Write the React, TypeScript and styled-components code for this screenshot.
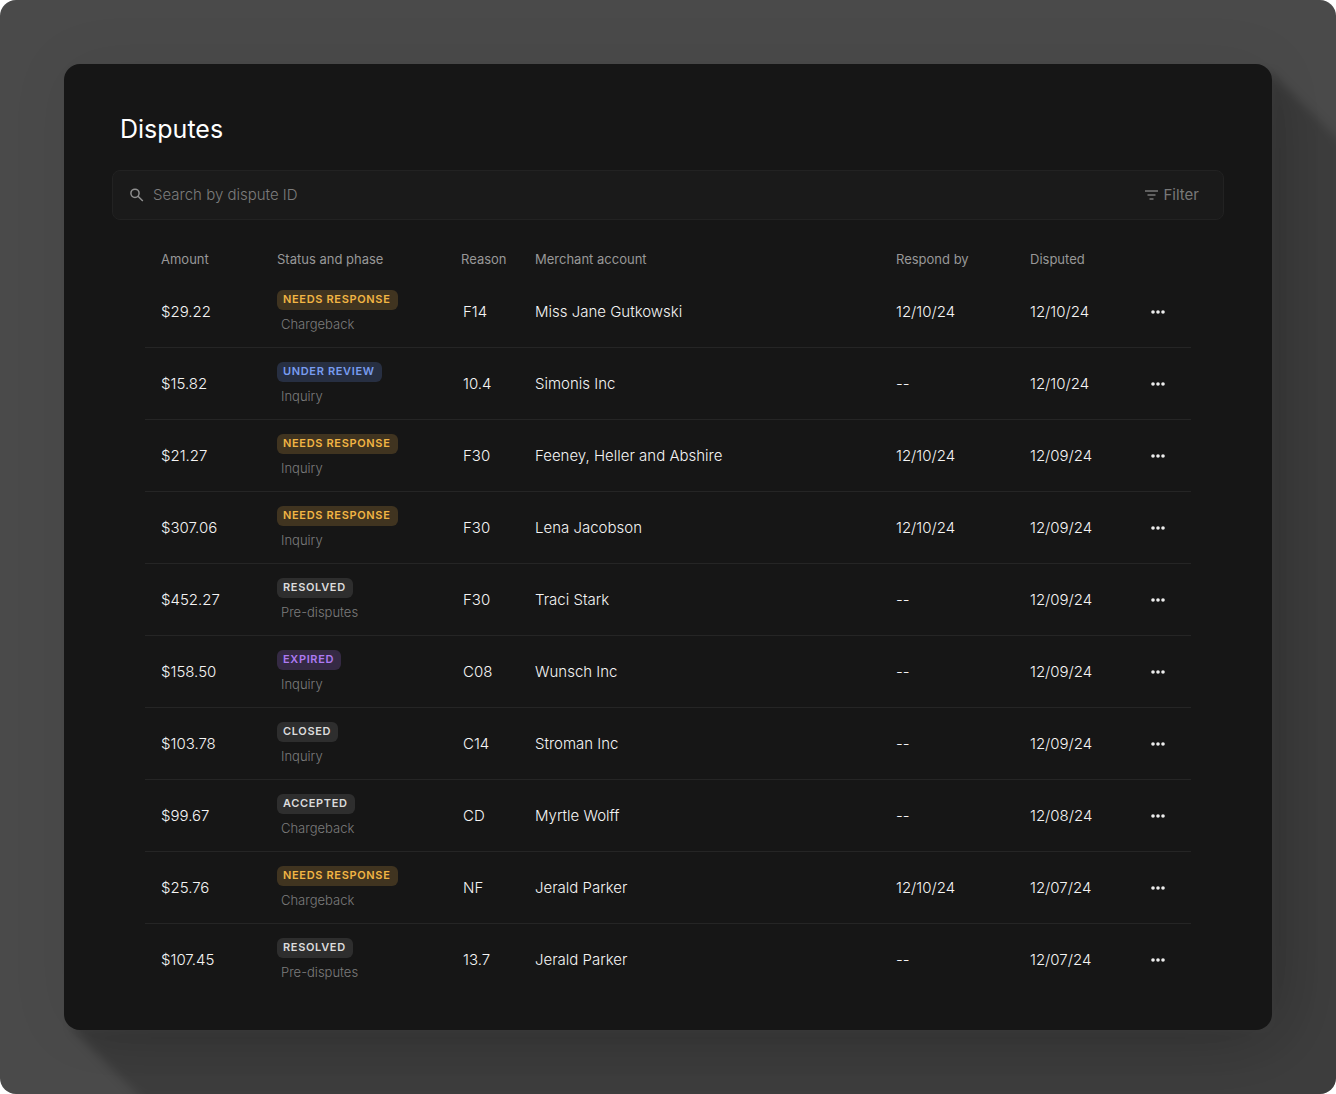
import React from "react";
import styled, { createGlobalStyle } from "styled-components";

const GlobalStyle = createGlobalStyle`
  *, *::before, *::after { box-sizing: border-box; }
  body {
    margin: 0;
    background: #ffffff;
    font-family: Inter, "Liberation Sans", sans-serif;
  }
`;

const Stage = styled.div`
  display: flex;
  min-height: 100vh;
  padding: 64px;
  overflow: hidden;
  border-radius: 16px;
  background: #4a4a4a;
`;

const PanelFrame = styled.div`
  position: relative;
  isolation: isolate;
  display: flex;
  flex: 1;
  min-width: 0;
`;

const Shade = styled.div`
  position: absolute;
  inset: 0 -96px -96px 0;
  z-index: -1;
  filter: blur(5px);
  pointer-events: none;
`;

// Long shadow cast at 45 degrees from the panel's two side corners, darkest next to the panel.
const Cast = styled.div`
  position: absolute;
  inset: 0;
  background: rgba(0, 0, 0, 0.17);
  clip-path: polygon(
    9px 9px,
    calc(100% - 96px) 9px,
    100% 105px,
    100% 100%,
    105px 100%,
    9px calc(100% - 96px)
  );

  &::before {
    content: "";
    position: absolute;
    inset: 0 96px 96px 0;
    border-radius: 16px;
    box-shadow: 0 0 72px rgba(0, 0, 0, 0.28);
  }
`;

const Panel = styled.main`
  flex: 1;
  min-width: 0;
  padding: 48px 48px 32px;
  border-radius: 16px;
  background: #161616;
  box-shadow: 0 0 64px rgba(0, 0, 0, 0.06);
`;

const Title = styled.h1`
  margin: 0;
  padding: 0 8px;
  color: #ffffff;
  font-size: 25px;
  font-weight: 400;
  line-height: 34px;
`;

const SearchBar = styled.form`
  display: flex;
  align-items: center;
  gap: 8px;
  height: 50px;
  margin-top: 24px;
  padding: 0 24px 0 16px;
  border: 1px solid #222222;
  border-radius: 8px;
  background: #1a1a1a;
`;

const SearchLabel = styled.label`
  display: flex;
  color: #8f8f8f;
`;

const SearchInput = styled.input`
  flex: 1;
  min-width: 0;
  padding: 0;
  border: 0;
  outline: 0;
  background: transparent;
  color: #f0f0f0;
  font: 300 15px/24px Inter, "Liberation Sans", sans-serif;

  &::placeholder {
    color: #7c7c7c;
    opacity: 1;
  }
`;

const FilterButton = styled.button`
  display: flex;
  align-items: center;
  gap: 4px;
  padding: 0;
  border: 0;
  background: transparent;
  color: #787878;
  font: 400 15px/24px Inter, "Liberation Sans", sans-serif;
  cursor: pointer;
`;

const TableWrap = styled.div`
  padding: 20px 33px 0;
`;

const Table = styled.table`
  width: 100%;
  border-collapse: separate;
  border-spacing: 0;
  table-layout: fixed;
`;

const HeadCell = styled.th<{ $width?: number }>`
  width: ${({ $width }) => ($width ? `${$width}px` : "auto")};
  height: 36px;
  padding: 2px 0 0 16px;
  color: #989898;
  font-size: 13px;
  font-weight: 400;
  line-height: 16px;
  text-align: left;
  white-space: nowrap;
`;

const Cell = styled.td<{ $indent?: number }>`
  height: 72px;
  padding: 0 0 0 ${({ $indent = 16 }) => $indent}px;
  border-bottom: 1px solid #252525;
  color: #f4f4f4;
  font-size: 15px;
  font-weight: 300;
  line-height: 20px;
  white-space: nowrap;

  tr:last-child > & {
    border-bottom-color: transparent;
  }
`;

const StatusStack = styled.div`
  display: flex;
  flex-direction: column;
  align-items: flex-start;
  gap: 6px;
  padding-bottom: 2px;
`;

type Tone = "amber" | "blue" | "violet" | "neutral";

const tones: Record<Tone, { fill: string; text: string }> = {
  amber: { fill: "#403420", text: "#f2b544" },
  blue: { fill: "#272f42", text: "#789cf0" },
  violet: { fill: "#352a44", text: "#ad7af2" },
  neutral: { fill: "#2e2e2e", text: "#dcdcdc" },
};

const Badge = styled.span<{ $tone: Tone }>`
  height: 20px;
  padding: 0 7px 0 6px;
  border-radius: 6px;
  background: ${({ $tone }) => tones[$tone].fill};
  color: ${({ $tone }) => tones[$tone].text};
  font-size: 11px;
  font-weight: 600;
  line-height: 19px;
  letter-spacing: 0.06em;
  text-transform: uppercase;
`;

const Phase = styled.span`
  padding-left: 4px;
  color: #7c7c7c;
  font-size: 13px;
  font-weight: 300;
  line-height: 16px;
`;

const MoreButton = styled.button`
  display: flex;
  padding: 0;
  border: 0;
  background: transparent;
  color: #ededed;
  cursor: pointer;
`;

const SearchIcon = () => (
  <svg width="16" height="16" viewBox="0 0 16 16" fill="none" stroke="currentColor" strokeWidth="1.5" aria-hidden="true">
    <circle cx="6" cy="6.3" r="4.1" />
    <path d="M9 9.3 13.8 14" />
  </svg>
);

const FilterIcon = () => (
  <svg width="16" height="16" viewBox="0 0 16 16" fill="none" stroke="currentColor" strokeWidth="1.6" aria-hidden="true">
    <path d="M1 4h13M3.5 8h8M5.5 12h4" />
  </svg>
);

const MoreIcon = () => (
  <svg width="14" height="16" viewBox="0 0 14 16" fill="currentColor" aria-hidden="true">
    <circle cx="2" cy="8" r="1.8" />
    <circle cx="7" cy="8" r="1.8" />
    <circle cx="12" cy="8" r="1.8" />
  </svg>
);

interface Dispute {
  amount: string;
  status: string;
  tone: Tone;
  phase: string;
  reason: string;
  merchant: string;
  respondBy: string;
  disputed: string;
}

const disputes: Dispute[] = [
  { amount: "$29.22", status: "Needs response", tone: "amber", phase: "Chargeback", reason: "F14", merchant: "Miss Jane Gutkowski", respondBy: "12/10/24", disputed: "12/10/24" },
  { amount: "$15.82", status: "Under review", tone: "blue", phase: "Inquiry", reason: "10.4", merchant: "Simonis Inc", respondBy: "--", disputed: "12/10/24" },
  { amount: "$21.27", status: "Needs response", tone: "amber", phase: "Inquiry", reason: "F30", merchant: "Feeney, Heller and Abshire", respondBy: "12/10/24", disputed: "12/09/24" },
  { amount: "$307.06", status: "Needs response", tone: "amber", phase: "Inquiry", reason: "F30", merchant: "Lena Jacobson", respondBy: "12/10/24", disputed: "12/09/24" },
  { amount: "$452.27", status: "Resolved", tone: "neutral", phase: "Pre-disputes", reason: "F30", merchant: "Traci Stark", respondBy: "--", disputed: "12/09/24" },
  { amount: "$158.50", status: "Expired", tone: "violet", phase: "Inquiry", reason: "C08", merchant: "Wunsch Inc", respondBy: "--", disputed: "12/09/24" },
  { amount: "$103.78", status: "Closed", tone: "neutral", phase: "Inquiry", reason: "C14", merchant: "Stroman Inc", respondBy: "--", disputed: "12/09/24" },
  { amount: "$99.67", status: "Accepted", tone: "neutral", phase: "Chargeback", reason: "CD", merchant: "Myrtle Wolff", respondBy: "--", disputed: "12/08/24" },
  { amount: "$25.76", status: "Needs response", tone: "amber", phase: "Chargeback", reason: "NF", merchant: "Jerald Parker", respondBy: "12/10/24", disputed: "12/07/24" },
  { amount: "$107.45", status: "Resolved", tone: "neutral", phase: "Pre-disputes", reason: "13.7", merchant: "Jerald Parker", respondBy: "--", disputed: "12/07/24" },
];

export default function App() {
  return (
    <>
      <GlobalStyle />
      <Stage>
        <PanelFrame>
          <Shade aria-hidden="true">
            <Cast />
          </Shade>
          <Panel>
            <Title>Disputes</Title>
            <SearchBar role="search" onSubmit={(event) => event.preventDefault()}>
              <SearchLabel htmlFor="dispute-search" aria-label="Search disputes">
                <SearchIcon />
              </SearchLabel>
              <SearchInput id="dispute-search" type="text" placeholder="Search by dispute ID" />
              <FilterButton type="button">
                <FilterIcon />
                Filter
              </FilterButton>
            </SearchBar>
            <TableWrap>
              <Table>
                <thead>
                  <tr>
                    <HeadCell scope="col" $width={116}>Amount</HeadCell>
                    <HeadCell scope="col" $width={184}>Status and phase</HeadCell>
                    <HeadCell scope="col" $width={74}>Reason</HeadCell>
                    <HeadCell scope="col">Merchant account</HeadCell>
                    <HeadCell scope="col" $width={134}>Respond by</HeadCell>
                    <HeadCell scope="col" $width={121}>Disputed</HeadCell>
                    <HeadCell scope="col" $width={56} aria-label="Actions" />
                  </tr>
                </thead>
                <tbody>
                  {disputes.map((dispute) => (
                    <tr key={dispute.amount}>
                      <Cell>{dispute.amount}</Cell>
                      <Cell>
                        <StatusStack>
                          <Badge $tone={dispute.tone}>{dispute.status}</Badge>
                          <Phase>{dispute.phase}</Phase>
                        </StatusStack>
                      </Cell>
                      <Cell $indent={18}>{dispute.reason}</Cell>
                      <Cell>{dispute.merchant}</Cell>
                      <Cell>{dispute.respondBy}</Cell>
                      <Cell>{dispute.disputed}</Cell>
                      <Cell>
                        <MoreButton type="button" aria-label={`Actions for ${dispute.amount}`}>
                          <MoreIcon />
                        </MoreButton>
                      </Cell>
                    </tr>
                  ))}
                </tbody>
              </Table>
            </TableWrap>
          </Panel>
        </PanelFrame>
      </Stage>
    </>
  );
}
